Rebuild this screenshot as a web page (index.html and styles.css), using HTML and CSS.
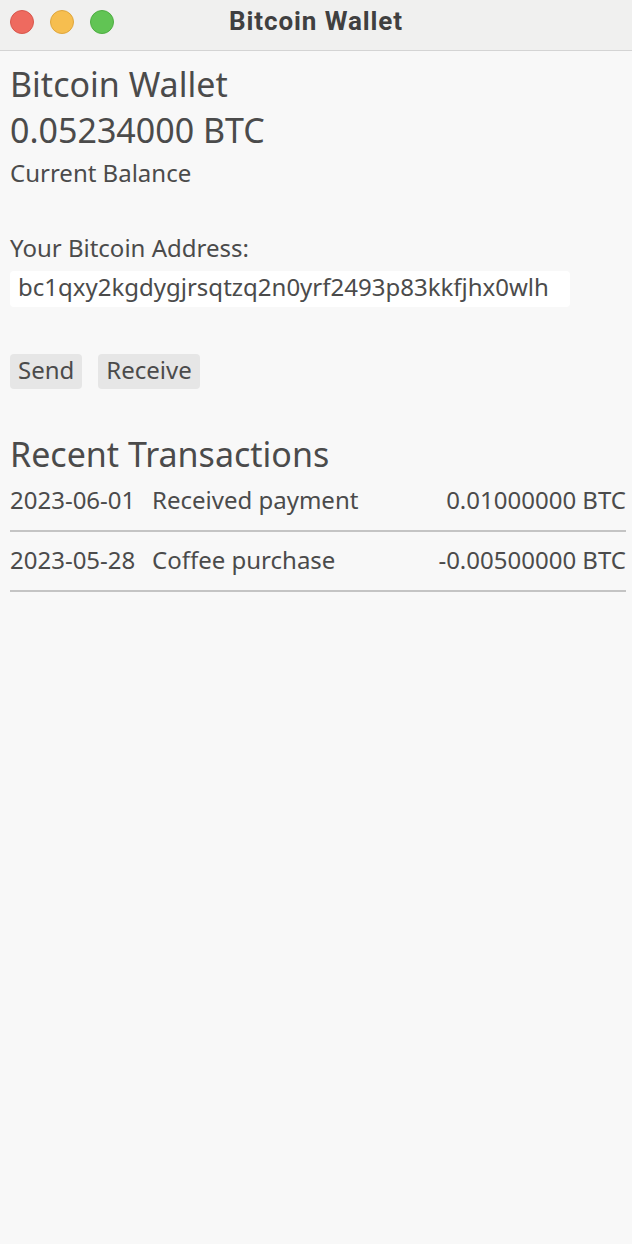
FILE: index.html
```html
<!DOCTYPE html>
<html>
<head>
<meta charset="utf-8">
<title>Bitcoin Wallet</title>
<link rel="stylesheet" href="styles.css">
</head>
<body>
<div class="titlebar">
  <div class="lights">
    <span class="light red"></span>
    <span class="light yellow"></span>
    <span class="light green"></span>
  </div>
  <div class="title">Bitcoin Wallet</div>
</div>
<main class="content">
  <h1 class="h-large">Bitcoin Wallet</h1>
  <div class="balance">0.05234000 BTC</div>
  <div class="sub">Current Balance</div>

  <div class="label">Your Bitcoin Address:</div>
  <div class="address">bc1qxy2kgdygjrsqtzq2n0yrf2493p83kkfjhx0wlh</div>

  <div class="actions">
    <button class="btn">Send</button>
    <button class="btn">Receive</button>
  </div>

  <h2 class="section">Recent Transactions</h2>
  <div class="tx-list">
    <div class="tx">
      <span class="tx-date">2023-06-01</span>
      <span class="tx-desc">Received payment</span>
      <span class="tx-amt">0.01000000 BTC</span>
    </div>
    <div class="tx">
      <span class="tx-date">2023-05-28</span>
      <span class="tx-desc">Coffee purchase</span>
      <span class="tx-amt">-0.00500000 BTC</span>
    </div>
  </div>
</main>
</body>
</html>
```
FILE: styles.css
```css
html, body {
  margin: 0;
  padding: 0;
  background: #f8f8f8;
}
body {
  font-family: "Noto Sans", "DejaVu Sans", sans-serif;
  color: #4b4b4b;
  width: 632px;
  min-height: 1244px;
}
.titlebar {
  height: 50px;
  background: #f0f0ef;
  border-bottom: 1px solid #d4d4d4;
  position: relative;
}
.lights {
  display: flex;
  gap: 16px;
  padding: 10px 0 0 10px;
}
.light {
  width: 24px;
  height: 24px;
  border-radius: 50%;
  box-sizing: border-box;
}
.red { background: #ee6a5f; border: 1px solid #d8574c; }
.yellow { background: #f6be4f; border: 1px solid #dfa63c; }
.green { background: #61c454; border: 1px solid #4eae42; }
.title {
  position: absolute;
  left: 0;
  right: 0;
  top: 0;
  line-height: 42px;
  text-align: center;
  font-family: Roboto, "Liberation Sans", sans-serif;
  font-weight: 700;
  font-size: 26px;
  letter-spacing: 0.9px;
  color: #404040;
  pointer-events: none;
}
.content {
  padding: 10px 6px 0 10px;
}
.h-large {
  margin: 0;
  font-weight: 400;
  font-size: 34px;
  line-height: 46px;
}
.balance {
  font-size: 34px;
  line-height: 46px;
}
.sub {
  margin-top: 4px;
  font-size: 24px;
  line-height: 32px;
}
.label {
  margin-top: 43px;
  font-size: 24px;
  line-height: 32px;
}
.address {
  margin-top: 7px;
  width: 560px;
  height: 36px;
  box-sizing: border-box;
  background: #ffffff;
  border-radius: 4px;
  padding: 0 8px;
  line-height: 32px;
  font-size: 24px;
  white-space: nowrap;
}
.actions {
  margin-top: 47px;
  display: flex;
  gap: 16px;
}
.btn {
  font-family: inherit;
  color: inherit;
  font-size: 24px;
  line-height: 32px;
  height: 35px;
  box-sizing: border-box;
  padding: 0 8px 3px;
  margin: 0;
  border: none;
  background: #e6e6e6;
  border-radius: 4px;
}
.section {
  margin: 47px 0 0;
  font-weight: 400;
  font-size: 34px;
  line-height: 36px;
}
.tx-list {
  display: flex;
  flex-direction: column;
}
.tx {
  display: flex;
  padding: 12px 0 14px;
  line-height: 32px;
  border-bottom: 2px solid #c4c4c4;
  font-size: 24px;
}
.tx-date {
  width: 142px;
}
.tx-desc {
  flex: 1;
}
.tx-amt {
  text-align: right;
}
```
